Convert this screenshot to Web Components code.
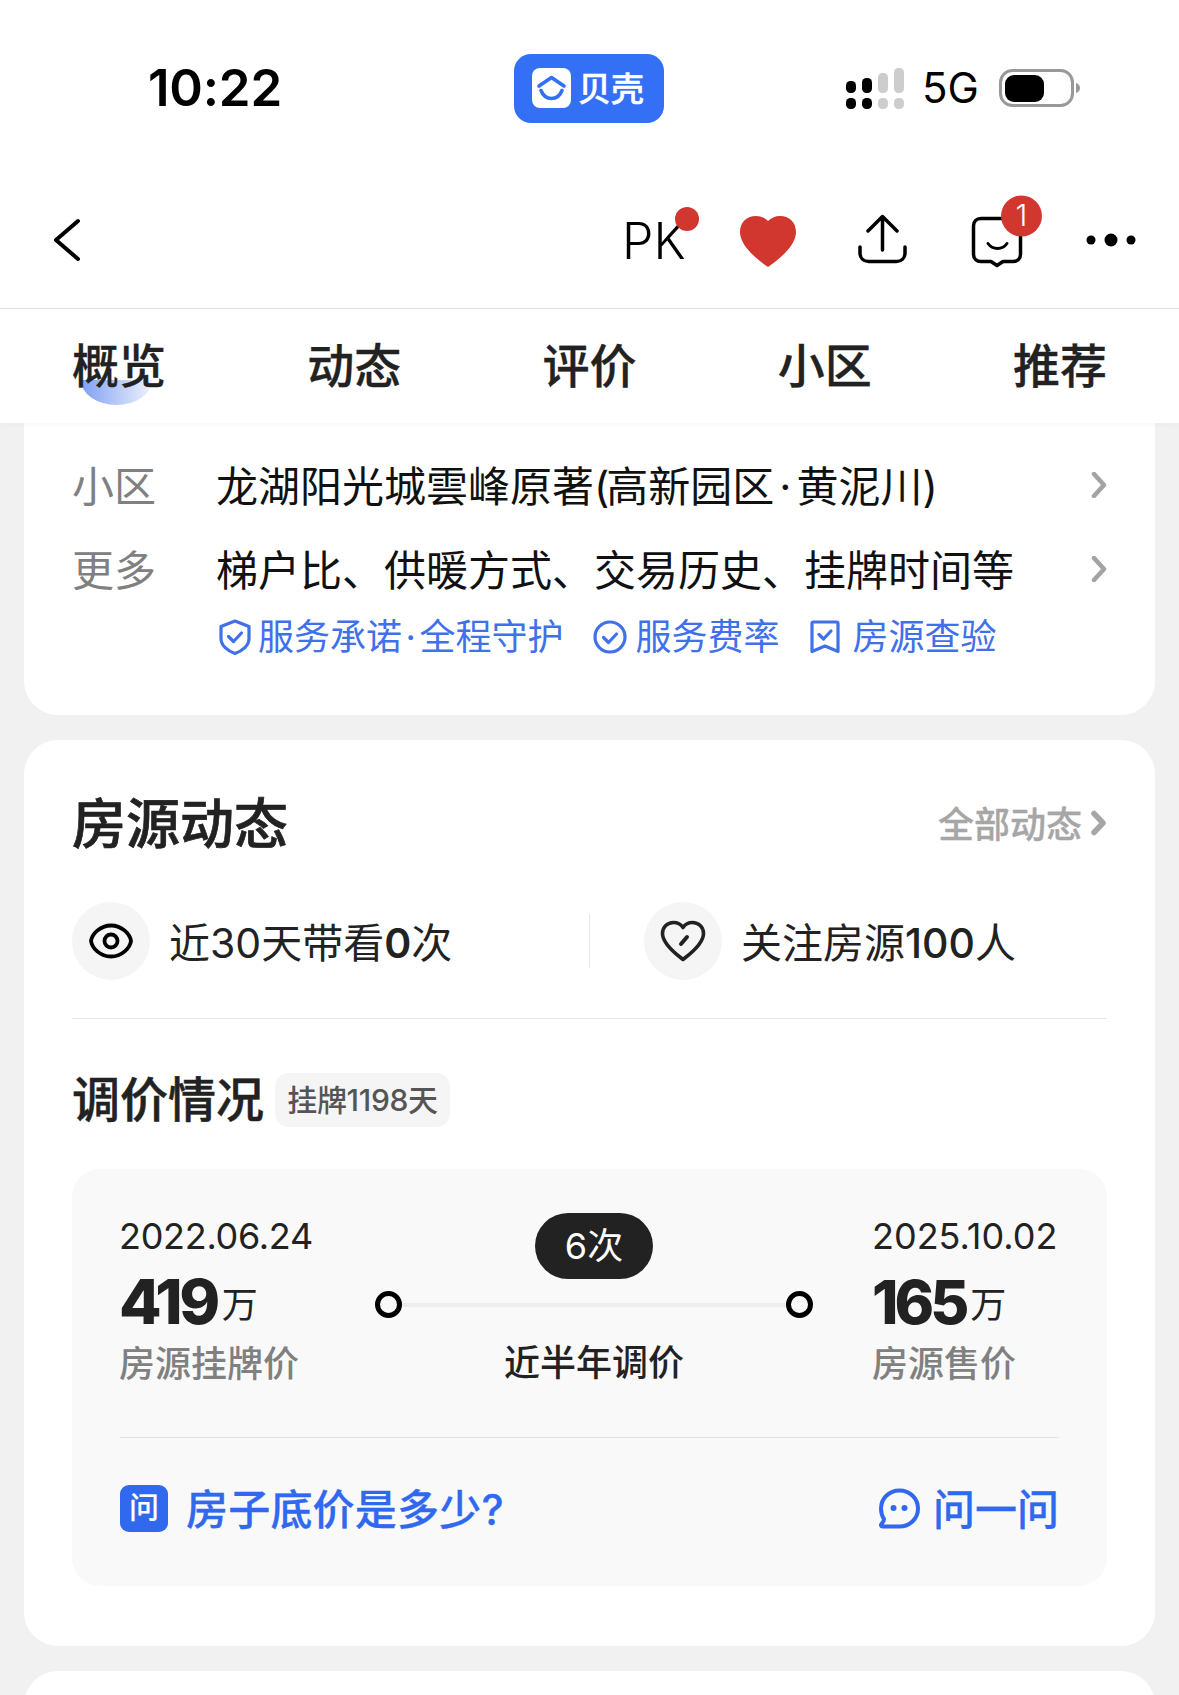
<!DOCTYPE html>
<html lang="zh-CN"><head><meta charset="utf-8">
<style>
html,body{margin:0;padding:0;background:#f1f1f1}
body{width:1179px;height:1695px;overflow:hidden;font-family:"Inter","Noto Sans CJK SC",sans-serif;color:#222}
</style></head><body>
<status-bar></status-bar>
<nav-bar></nav-bar>
<tab-bar></tab-bar>
<info-card></info-card>
<dynamics-card></dynamics-card>
<div style="height:25px"></div>
<blank-card></blank-card>
<script>
const FONT='"Inter","Noto Sans CJK SC",sans-serif';
function def(name,html){
  customElements.define(name,class extends HTMLElement{
    constructor(){super();this.attachShadow({mode:'open'}).innerHTML=html;}
  });
}
def('status-bar',`<style>
:host{display:flex;align-items:center;height:176px;background:#fff;position:relative;font-family:${FONT}}
.time{width:514px;box-sizing:border-box;padding-left:148px;font-size:51px;font-weight:600;color:#000;line-height:60px;letter-spacing:-.2px}
.pill{width:150px;height:69px;background:#3370f5;border-radius:17px;display:flex;align-items:center;box-sizing:border-box;padding:0 0 2px 18px;gap:7px;color:#fff;font-size:33px;font-weight:500;font-family:"Noto Sans CJK SC",sans-serif;-webkit-text-stroke:.5px #fff}
.logo{width:39px;height:40px;display:block;flex:none;margin-top:2px}
.right{display:flex;align-items:center;margin-left:182px}
.five{font-size:42px;color:#000;line-height:50px;margin:0 20px 0 18px;font-weight:400}
svg{display:block}
</style>
<div class="time">10:22</div>
<div class="pill"><svg class="logo" viewBox="0 0 39 40"><rect width="39" height="40" rx="8" fill="#fff"/><path d="M7 18 19.500 9.500 32 18" fill="none" stroke="#3370f5" stroke-width="3.600" stroke-linecap="round" stroke-linejoin="round"/><path d="M9 22.500C11 27.500 15 30.500 19.500 30.500S28 27.500 30 22.500" fill="none" stroke="#3370f5" stroke-width="3.600" stroke-linecap="round"/></svg><span>贝壳</span></div>
<div class="right">
<svg width="58" height="41" viewBox="0 0 58 41"><g fill="#000"><rect x="0" y="13" width="10" height="12" rx="4.500"/><rect x="0" y="30" width="10" height="11" rx="4.500"/><rect x="16" y="10" width="10" height="15" rx="4.500"/><rect x="16" y="30" width="10" height="11" rx="4.500"/></g><g fill="#cdcdcd"><rect x="32" y="5" width="10" height="20" rx="4.500"/><rect x="32" y="30" width="10" height="11" rx="4.500"/><rect x="48" y="0" width="10" height="25" rx="4.500"/><rect x="48" y="30" width="10" height="11" rx="4.500"/></g></svg>
<div class="five">5G</div>
<svg width="81" height="38" viewBox="0 0 81 38"><rect x="1.500" y="1.500" width="72" height="35" rx="12" fill="none" stroke="#999" stroke-width="3"/><rect x="6" y="6" width="39" height="27" rx="9" fill="#000"/><path d="M77 14c2.500.5 4 2.500 4 5s-1.500 4.500-4 5z" fill="#999"/></svg>
</div>`);
def('nav-bar',`<style>
:host{display:block;height:132px;background:#fff;border-bottom:1px solid #dedede;position:relative}
svg{display:block;width:1179px;height:132px;position:absolute;left:0;top:0}
.row{display:flex;height:132px;align-items:center;box-sizing:border-box;padding:0 0 2px 622px}
.pk{font:300 50px/56px "Inter",sans-serif;color:#000}
</style>
<div class="row"><span class="pk">PK</span></div>
<svg viewBox="0 176 1179 132">
<path d="M78 221 56 240 78 259" fill="none" stroke="#000" stroke-width="4" stroke-linecap="round" stroke-linejoin="round"/>
<circle cx="687" cy="219" r="12" fill="#d2372f"/>
<path d="M768 267C755 258 740 245 740 232 740 222 747 216 756 216 761 216 765 218 768 221 771 218 775 216 780 216 789 216 796 222 796 232 796 245 781 258 768 267z" fill="#d2372f"/>
<path d="M882.500 250V217M868 231l14.500-14.500L897 231M860 247v6c0 5 3.500 8.500 8.500 8.500h28c5 0 8.500-3.500 8.500-8.500v-6" fill="none" stroke="#000" stroke-width="3.500" stroke-linecap="round" stroke-linejoin="round"/>
<path d="M981 218.500h32c4.500 0 7.500 3 7.500 7.500v28c0 4.500-3 7.500-7.500 7.500h-10l-6 4-6-4h-10c-4.500 0-7.500-3-7.500-7.500v-28c0-4.500 3-7.500 7.500-7.500z" fill="none" stroke="#000" stroke-width="3.500" stroke-linejoin="round"/>
<path d="M988 243.500c2.500 3.500 5.500 5 9.500 5s7-1.500 9.500-5" fill="none" stroke="#000" stroke-width="3" stroke-linecap="round"/>
<circle cx="1021.500" cy="216" r="20.500" fill="#d2372f"/>
<circle cx="1091" cy="240" r="4.500" fill="#000"/><circle cx="1111" cy="240" r="6.500" fill="#000"/><circle cx="1131" cy="240" r="4.500" fill="#000"/>
</svg>
<span style="position:absolute;left:1001px;top:18px;width:41px;text-align:center;font:300 30px/42px Inter,sans-serif;color:#fff">1</span>`);
def('tab-bar',`<style>
:host{display:flex;justify-content:space-between;align-items:center;height:114px;background:#fff;box-sizing:border-box;padding:0 72px 6px;position:relative;z-index:1;box-shadow:0 3px 6px rgba(0,0,0,.025);font:500 47px/60px "Noto Sans CJK SC",sans-serif;color:#222}
.t{position:relative;-webkit-text-stroke:.3px #222}
.t span{position:relative}
.t.on::before{content:"";position:absolute;left:9px;top:47px;width:71px;height:25px;border-radius:0 0 36px 36px/0 0 25px 25px;background:linear-gradient(90deg,#7f9ff3,#eef2fd)}
</style>
<div class="t on"><span>概览</span></div><div class="t"><span>动态</span></div><div class="t"><span>评价</span></div><div class="t"><span>小区</span></div><div class="t"><span>推荐</span></div>`);
def('info-card',`<style>
:host{display:block;margin:0 24px;background:#fff;border-radius:0 0 34px 34px;height:292px;box-sizing:border-box;padding:22px 48px 0;font:400 42px/84px "Inter","Noto Sans CJK SC",sans-serif}
.r{display:flex;height:84px;align-items:center}
.l{width:144px;color:#808080}
.v{flex:1;color:#111;white-space:nowrap}
.v .p{letter-spacing:-3px}
.v .d{margin:0 5px}
.c{display:block;margin-bottom:4px}
.b{display:flex;align-items:center;height:48px;margin:0 0 0 144px;color:#4070ea;font-size:36px;line-height:48px;white-space:nowrap}
.b .d{margin:0 3.500px}
.b svg{display:block;flex:none;margin-right:6px}
.b svg.i2{margin-left:30px;margin-right:8px}
.b svg.i3{margin-left:31px;margin-right:12px}
</style>
<div class="r"><span class="l">小区</span><span class="v">龙湖阳光城雲峰原著<span class="p">(</span>高新园区<span class="d">·</span>黄泥川)</span><svg class="c" width="16" height="26" viewBox="0 0 16 26"><path d="M3 2l10 11L3 24" fill="none" stroke="#a3a3a3" stroke-width="4.500" stroke-linecap="round" stroke-linejoin="round"/></svg></div>
<div class="r"><span class="l">更多</span><span class="v">梯户比、供暖方式、交易历史、挂牌时间等</span><svg class="c" width="16" height="26" viewBox="0 0 16 26"><path d="M3 2l10 11L3 24" fill="none" stroke="#a3a3a3" stroke-width="4.500" stroke-linecap="round" stroke-linejoin="round"/></svg></div>
<div class="b">
<svg width="34" height="36" viewBox="0 0 34 36" style="margin-left:2px"><path d="M17 2 31 7.500v12c0 7-6.500 12.500-14 15C9.500 32 3 26.500 3 19.500v-12z" fill="none" stroke="#4070ea" stroke-width="3.200" stroke-linejoin="round"/><path d="M10.500 17.500l5 5 8-8.500" fill="none" stroke="#4070ea" stroke-width="3.200" stroke-linecap="round" stroke-linejoin="round"/></svg>
<span>服务承诺<span class="d">·</span>全程守护</span>
<svg class="i2" width="34" height="34" viewBox="0 0 34 34"><circle cx="17" cy="17" r="15" fill="none" stroke="#4070ea" stroke-width="3.200"/><path d="M10.500 17.500l5 5 8-8.500" fill="none" stroke="#4070ea" stroke-width="3.200" stroke-linecap="round" stroke-linejoin="round"/></svg>
<span>服务费率</span>
<svg class="i3" width="30" height="34" viewBox="0 0 30 34"><path d="M2 3.500C2 2.500 2.500 2 3.500 2h23c1 0 1.500.5 1.500 1.500V31.500L15 26 2 31.500z" fill="none" stroke="#4070ea" stroke-width="3.200" stroke-linejoin="round"/><path d="M9 14.500l4.500 4.500 7.500-8" fill="none" stroke="#4070ea" stroke-width="3.200" stroke-linecap="round" stroke-linejoin="round"/></svg>
<span>房源查验</span>
</div>`);
def('section-head',`<style>
:host{display:flex;align-items:center;justify-content:space-between;height:162px;padding-top:4px;box-sizing:border-box}
.t{font:500 54px/64px "Noto Sans CJK SC",sans-serif;-webkit-text-stroke:.7px #222;color:#222;padding-bottom:4px}
.m{display:flex;align-items:center;font:500 36px/48px "Noto Sans CJK SC",sans-serif;color:#a6a6a6;-webkit-text-stroke:.3px #a6a6a6}
.m span{padding-bottom:2px}
svg{display:block;margin-left:9px}
</style>
<div class="t"><slot name="title"></slot></div>
<div class="m"><span><slot name="more"></slot></span><svg width="16" height="26" viewBox="0 0 16 26"><path d="M3 3.500l9 9.500-9 9.500" fill="none" stroke="#a6a6a6" stroke-width="5.500" stroke-linecap="round" stroke-linejoin="round"/></svg></div>`);
def('stat-item',`<style>
:host{display:flex;align-items:center;height:78px;font:400 41px/56px "Inter","Noto Sans CJK SC",sans-serif;color:#222;white-space:nowrap}
.c{width:78px;height:78px;border-radius:50%;background:#f5f5f5;display:flex;align-items:center;justify-content:center;margin-right:19px;flex:none}
.x{padding-top:4px}
</style>
<div class="c"><slot name="icon"></slot></div><div class="x"><slot></slot></div>`);
def('price-end',`<style>
:host{display:block;white-space:nowrap;font-family:"Inter","Noto Sans CJK SC",sans-serif}
.d{font-size:36px;line-height:48px;color:#222;letter-spacing:var(--ls,0)}
.n{height:79px;line-height:84px;color:#222}
.n b{font-size:var(--ns,62px);font-weight:800;letter-spacing:var(--nls,-3.500px)}
.n i{font-style:normal;font-size:36px;margin-left:5px;font-family:"Noto Sans CJK SC",sans-serif;vertical-align:6px}
.l{font:500 36px/44px "Noto Sans CJK SC",sans-serif;color:#808080}
</style>
<div class="d"><slot name="date"></slot></div>
<div class="n"><b><slot name="num"></slot></b><i>万</i></div>
<div class="l"><slot name="label"></slot></div>`);
def('price-line',`<style>
:host{display:flex;flex-direction:column;align-items:center;font-family:"Noto Sans CJK SC",sans-serif}
.p{width:118px;height:66px;border-radius:33px;background:#222;color:#fff;font:400 36px/66px "Inter","Noto Sans CJK SC",sans-serif;text-align:center;box-sizing:border-box}
.l{align-self:stretch;display:flex;align-items:center;height:27px;margin-top:12px}
.o{width:27px;height:27px;border-radius:50%;border:5px solid #000;box-sizing:border-box;flex:none}
.s{flex:1;height:4px;background:#eeeeee}
.t{font:500 36px/44px "Noto Sans CJK SC",sans-serif;margin-top:20px;color:#222}
</style>
<div class="p"><slot name="count"></slot></div>
<div class="l"><div class="o"></div><div class="s"></div><div class="o"></div></div>
<div class="t"><slot name="label"></slot></div>`);
def('ask-row',`<style>
:host{display:flex;align-items:center;justify-content:space-between;height:140px;margin-bottom:8px;color:#3169ee;font:500 42px/56px "Inter","Noto Sans CJK SC",sans-serif;white-space:nowrap;-webkit-text-stroke:.3px #3169ee}
.a,.b{display:flex;align-items:center}
.a span{letter-spacing:.2px;padding-top:4px}
.b span{padding-top:3px}
.q{width:48px;height:47px;border-radius:9px;background:#3169ee;color:#fff;-webkit-text-stroke:.1px #fff;font-size:30px;line-height:45px;text-align:center;margin-right:18px}
.b svg{display:block;margin:0 12px 0 1px}
</style>
<div class="a"><div class="q">问</div><span><slot name="q"></slot></span></div>
<div class="b"><svg width="43" height="41" viewBox="0 0 43 41"><path d="M21.500 2.500C32 2.500 40 10.500 40 20.500S32 38.500 21.500 38.500H4.500c-1.500 0-2-1.500-1-2.500 1.500-1.500 2.500-3.500 2.500-5-2-3-3-6.500-3-10.500 0-10 8-18 18.500-18z" fill="none" stroke="#3169ee" stroke-width="4" stroke-linejoin="round"/><circle cx="15.500" cy="20" r="3" fill="#3169ee"/><circle cx="26.500" cy="20" r="3" fill="#3169ee"/></svg><span><slot name="a"></slot></span></div>`);
def('dynamics-card',`<style>
:host{display:block;margin:25px 24px 0;height:906px;background:#fff;border-radius:34px;box-sizing:border-box;padding:0 48px}
.stats{display:flex;height:78px}
.col{width:517px;flex:none}
.sep{width:1px;height:54px;margin-top:12px;background:#e6e6e6;flex:none}
.col2{margin-left:54px}
hr{border:0;height:1px;background:#e6e6e6;margin:38px 0 0}
.sub{display:flex;align-items:center;height:54px;margin:54px 0 42px}
.sub h3{margin:0 0 8px;font:500 48px/60px "Noto Sans CJK SC",sans-serif;-webkit-text-stroke:.5px #222;color:#222}
.tag{margin-left:11px;width:175px;height:54px;border-radius:14px;background:#f5f5f5;color:#555;font:500 30px/54px "Inter","Noto Sans CJK SC",sans-serif;text-align:center;white-space:nowrap;letter-spacing:-.3px}
.panel{height:417px;background:#f9f9f9;border-radius:28px;box-sizing:border-box;padding:43px 48px 0}
.top{display:flex;height:172px}
.le{width:255px;flex:none;margin-left:-1px;margin-right:1px;--ls:-.3px}
.mid{width:438px;flex:none;margin-top:1px}
.ri{margin-left:59px;--ns:60px;--nls:-4px}
.div{height:1px;background:#e5e5e5;margin-top:53px}
b{font-weight:600}
</style>
<section-head><span slot="title">房源动态</span><span slot="more">全部动态</span></section-head>
<div class="stats">
<div class="col"><stat-item><svg slot="icon" width="44" height="36" viewBox="0 0 44 36"><path d="M22 2.500C33 2.500 41 11 42 18 41 25 33 33.500 22 33.500S3 25 2 18C3 11 11 2.500 22 2.500z" fill="none" stroke="#000" stroke-width="3.800"/><circle cx="22" cy="18" r="6.500" fill="none" stroke="#000" stroke-width="3.800"/></svg>近30天带看<b>0</b>次</stat-item></div>
<div class="sep"></div>
<div class="col2"><stat-item><svg slot="icon" width="46" height="42" viewBox="0 0 46 42"><path d="M23 39.500C20 37 2.500 25 2.500 13.500 2.500 7 7.500 2.500 13.500 2.500c4 0 7.500 2 9.500 5 2-3 5.500-5 9.500-5 6 0 11 4.500 11 11C43.500 25 26 37 23 39.500z" fill="none" stroke="#222" stroke-width="3.600" stroke-linejoin="round"/><path d="M21 24l6-7" fill="none" stroke="#222" stroke-width="4" stroke-linecap="round"/></svg>关注房源<b style="font-weight:500">100</b>人</stat-item></div>
</div>
<hr>
<div class="sub"><h3>调价情况</h3><div class="tag">挂牌1198天</div></div>
<div class="panel">
<div class="top">
<price-end class="le"><span slot="date">2022.06.24</span><span slot="num">419</span><span slot="label">房源挂牌价</span></price-end>
<price-line class="mid"><span slot="count">6次</span><span slot="label">近半年调价</span></price-line>
<price-end class="ri"><span slot="date">2025.10.02</span><span slot="num">165</span><span slot="label">房源售价</span></price-end>
</div>
<div class="div"></div>
<ask-row><span slot="q">房子底价是多少?</span><span slot="a">问一问</span></ask-row>
</div>`);
def('blank-card',`<style>:host{display:block;margin:0 24px;height:60px;background:#fff;border-radius:34px 34px 0 0}</style>`);
</script>
</body></html>
